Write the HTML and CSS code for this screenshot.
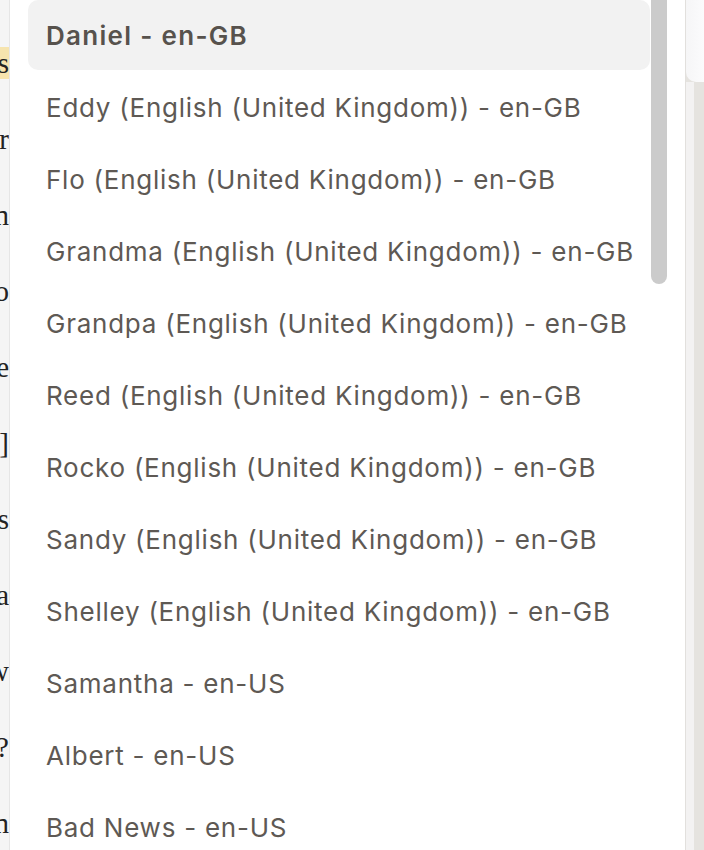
FILE: index.html
```html
<!DOCTYPE html>
<html lang="en">

<head>
  <meta charset="UTF-8">
  <meta name="viewport" content="width=device-width, initial-scale=1.0">
  <title>Voice Picker</title>
  <link rel="stylesheet" href="styles.css">
</head>

<body>
  <div class="page-wrapper">
    <!-- article text behind the menu -->
    <div class="article">
      <p><span class="mark">Notes</span></p>
      <p>the reader</p>
      <p>a question in</p>
      <p>into</p>
      <p>to be more</p>
      <p>[link]</p>
      <p>audio is</p>
      <p>a</p>
      <p>how</p>
      <p>why?</p>
      <p>then in</p>
    </div>

    <div class="voice-menu">
      <ul class="voice-list">
        <li class="voice selected">Daniel - en-GB</li>
        <li class="voice">Eddy (English (United Kingdom)) - en-GB</li>
        <li class="voice">Flo (English (United Kingdom)) - en-GB</li>
        <li class="voice">Grandma (English (United Kingdom)) - en-GB</li>
        <li class="voice">Grandpa (English (United Kingdom)) - en-GB</li>
        <li class="voice">Reed (English (United Kingdom)) - en-GB</li>
        <li class="voice">Rocko (English (United Kingdom)) - en-GB</li>
        <li class="voice">Sandy (English (United Kingdom)) - en-GB</li>
        <li class="voice">Shelley (English (United Kingdom)) - en-GB</li>
        <li class="voice">Samantha - en-US</li>
        <li class="voice">Albert - en-US</li>
        <li class="voice">Bad News - en-US</li>
      </ul>
      <div class="scroll-track">
        <div class="scroll-thumb"></div>
      </div>
    </div>

    <div class="side-panel">
      <div class="side-card"></div>
      <div class="side-body">
        <div class="side-edge"></div>
        <div class="side-fill"></div>
      </div>
    </div>
  </div>
</body>

</html>
```

FILE: styles.css
```css
* {
  margin: 0;
  padding: 0;
  box-sizing: border-box;
}

html,
body {
  height: 100%;
  width: 100%;
  overflow: hidden;
}

body {
  background: #ffffff;
}

.page-wrapper {
  height: 100%;
  width: 100%;
  display: flex;
}

/* page text peeking out on the left */
.article {
  width: 10px;
  flex-shrink: 0;
  background: #f5f5f5;
  border-right: 1px solid #e6e6e6;
  overflow: hidden;
  direction: rtl;
  padding-top: 43px;
  font-family: "Liberation Serif", serif;
  font-size: 29px;
  color: #222222;
}

.article p {
  direction: ltr;
  white-space: nowrap;
  height: 76px;
  line-height: 40px;
  text-align: right;
  float: right;
  clear: both;
}

.mark {
  background: #f6e4ae;
}

.voice-menu {
  flex: 1;
  display: flex;
  background: #ffffff;
  border-right: 1px solid #e2e0dd;
  padding-left: 18px;
}

.voice-list {
  list-style: none;
  width: 622px;
  display: flex;
  flex-direction: column;
  gap: 2px;
}

.voice {
  height: 70px;
  flex-shrink: 0;
  display: flex;
  align-items: center;
  padding-left: 18px;
  font-family: "Inter", sans-serif;
  font-size: 26px;
  letter-spacing: 0.75px;
  color: #5e5954;
  white-space: nowrap;
  border-radius: 10px;
}

.voice.selected {
  background: #f2f2f2;
  font-weight: 600;
  letter-spacing: 1.3px;
  color: #57524d;
}

.scroll-track {
  width: 16px;
  margin-left: 1px;
}

.scroll-thumb {
  height: 294px;
  margin-top: -10px;
  background: #cbcbcb;
  border-radius: 8px;
}

/* neighbouring column on the right */
.side-panel {
  width: 18px;
  flex-shrink: 0;
  display: flex;
  flex-direction: column;
  background: #e5e3df;
}

.side-card {
  height: 82px;
  background: linear-gradient(90deg, #f6f6f7, #fbfbfc);
  border-bottom-left-radius: 10px;
}

.side-body {
  flex: 1;
  display: flex;
}

.side-edge {
  width: 8px;
  background: #f3f2f2;
}

.side-fill {
  flex: 1;
}
```
